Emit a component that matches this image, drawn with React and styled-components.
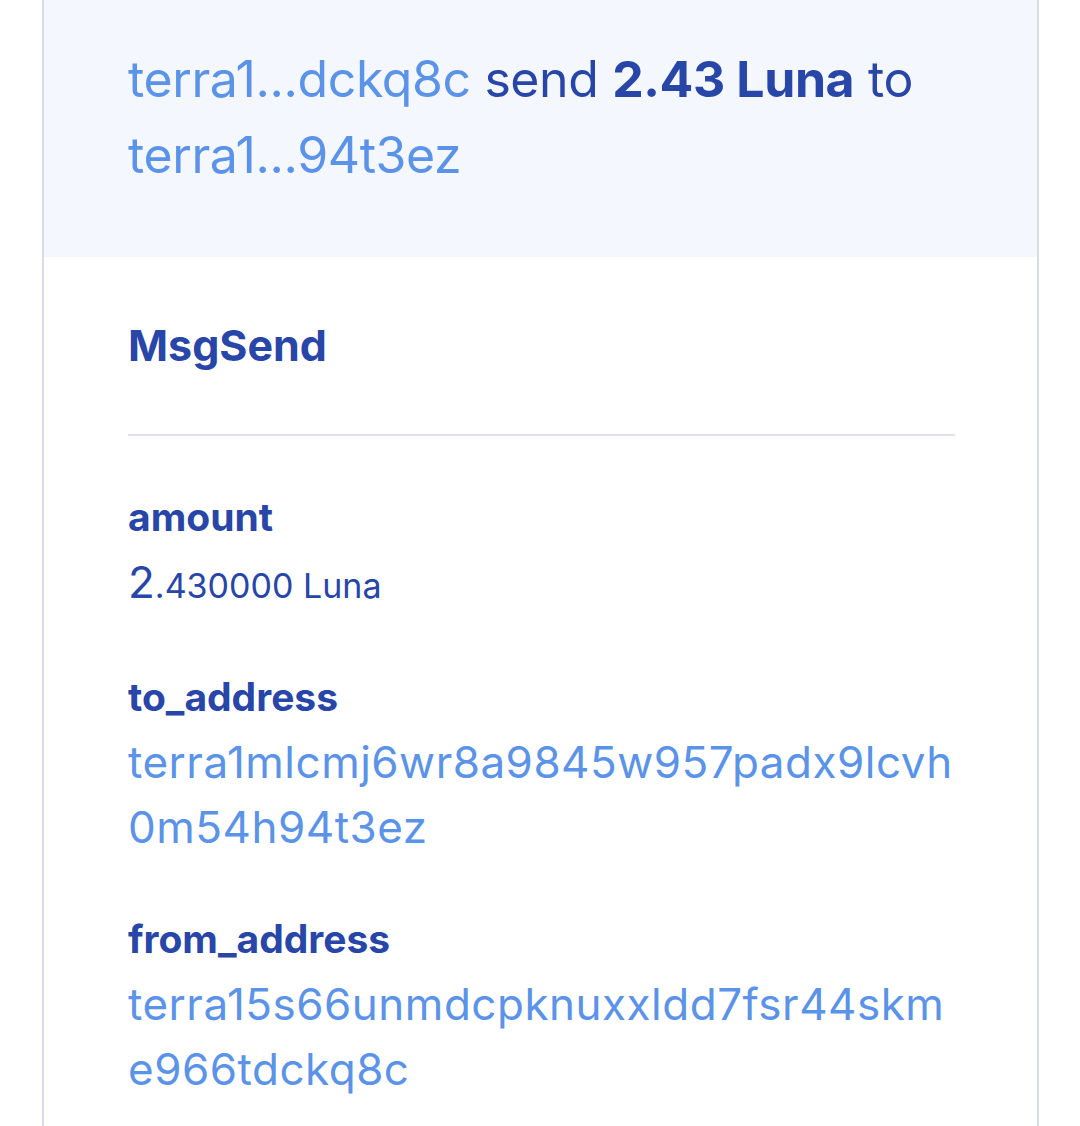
import React from "react";
import styled, { createGlobalStyle } from "styled-components";

const GlobalStyle = createGlobalStyle`
  html, body {
    margin: 0;
    padding: 0;
    background: #ffffff;
  }
  body {
    font-family: Inter, "DejaVu Sans", sans-serif;
    -webkit-font-smoothing: antialiased;
  }
`;

const Card = styled.article`
  margin: 0 41px 0 42px;
  border-left: 2px solid #d8dce7;
  border-right: 2px solid #d8dce7;
  min-height: 1126px;
  background: #ffffff;
`;

const Summary = styled.header`
  background: #f4f8fe;
  padding: 41px 84px 64px;
  font-size: 50px;
  line-height: 76px;
  color: #2845a8;
  letter-spacing: -0.4px;
`;

const Address = styled.span`
  color: #5b93e8;
`;

const Strong = styled.strong`
  font-weight: 700;
`;

const Body = styled.section`
  padding: 58px 82px 0 84px;
`;

const Title = styled.h2`
  margin: 0;
  font-size: 43px;
  line-height: 60px;
  font-weight: 700;
  color: #2845a8;
`;

const Divider = styled.hr`
  margin: 59px 0 0;
  border: 0;
  border-top: 2px solid #dde1ea;
`;

const Fields = styled.dl`
  margin: 0;
  padding-top: 48px;
  display: flex;
  flex-direction: column;
  gap: 46px;
`;

const Field = styled.div`
  display: flex;
  flex-direction: column;
`;

const Label = styled.dt`
  font-size: 39px;
  line-height: 66px;
  font-weight: 700;
  color: #2845a8;
`;

const Value = styled.dd`
  margin: 0;
  font-size: 44px;
  line-height: 65px;
  letter-spacing: ${(p) => (p.$link ? "0.5px" : "0")};
  color: ${(p) => (p.$link ? "#5b93e8" : "#2845a8")};
  word-break: break-all;
`;

const Decimal = styled.small`
  font-size: 34px;
`;

const fields = [
  { label: "amount", int: "2", dec: ".430000 Luna" },
  { label: "to_address", link: "terra1mlcmj6wr8a9845w957padx9lcvh0m54h94t3ez" },
  { label: "from_address", link: "terra15s66unmdcpknuxxldd7fsr44skme966tdckq8c" },
];

export default function App() {
  return (
    <>
      <GlobalStyle />
      <Card>
        <Summary>
          <Address>terra1...dckq8c</Address> send <Strong>2.43 Luna</Strong> to{" "}
          <Address>terra1...94t3ez</Address>
        </Summary>
        <Body>
          <Title>MsgSend</Title>
          <Divider />
          <Fields>
            {fields.map((f) => (
              <Field key={f.label}>
                <Label>{f.label}</Label>
                {f.link ? (
                  <Value $link>{f.link}</Value>
                ) : (
                  <Value>
                    {f.int}
                    <Decimal>{f.dec}</Decimal>
                  </Value>
                )}
              </Field>
            ))}
          </Fields>
        </Body>
      </Card>
    </>
  );
}
